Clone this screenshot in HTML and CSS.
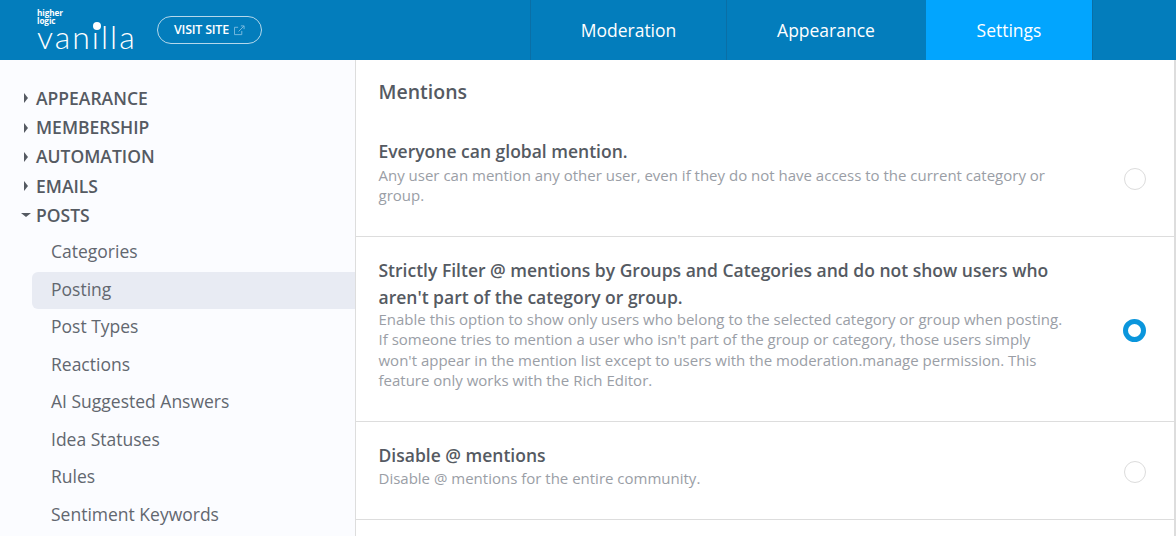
FILE: index.html
```html
<!DOCTYPE html>
<html lang="en">
<head>
<meta charset="utf-8">
<title>Mentions</title>
<link rel="stylesheet" href="styles.css">
</head>
<body>
<header class="top">
  <div class="brand">
    <a class="logo">
      <span class="logo-small">higher<br>logic</span>
      <span class="logo-word">van<span class="i">ı<span class="dot"></span></span>lla</span>
    </a>
    <a class="visit">VISIT SITE
      <svg class="ext" viewBox="0 0 12 12" width="11" height="11" fill="none" stroke="currentColor" stroke-width="1"><path d="M8.5 6.5v4h-8v-8h4"/><path d="M5 7l6-6M7.5 1H11v3.5"/></svg>
    </a>
  </div>
  <nav class="tabs">
    <a class="tab t1">Moderation</a>
    <a class="tab t2">Appearance</a>
    <a class="tab t3 active">Settings</a>
    <span class="tab-rest"></span>
  </nav>
</header>
<div class="body">
  <aside class="side">
    <ul class="groups">
      <li class="group"><i class="tri right"></i>APPEARANCE</li>
      <li class="group"><i class="tri right"></i>MEMBERSHIP</li>
      <li class="group"><i class="tri right"></i>AUTOMATION</li>
      <li class="group"><i class="tri right"></i>EMAILS</li>
      <li class="group"><i class="tri down"></i>POSTS</li>
    </ul>
    <ul class="links">
      <li class="link">Categories</li>
      <li class="link current">Posting</li>
      <li class="link">Post Types</li>
      <li class="link">Reactions</li>
      <li class="link">AI Suggested Answers</li>
      <li class="link">Idea Statuses</li>
      <li class="link">Rules</li>
      <li class="link">Sentiment Keywords</li>
    </ul>
  </aside>
  <main class="main">
    <h1 class="title">Mentions</h1>
    <section class="row r1">
      <div class="text">
        <h2>Everyone can global mention.</h2>
        <p>Any user can mention any other user, even if they do not have access to the current category or group.</p>
      </div>
      <span class="radio"></span>
    </section>
    <section class="row r2">
      <div class="text">
        <h2>Strictly Filter @ mentions by Groups and Categories and do not show users who aren't part of the category or group.</h2>
        <p>Enable this option to show only users who belong to the selected category or group when posting. If someone tries to mention a user who isn't part of the group or category, those users simply won't appear in the mention list except to users with the moderation.manage permission. This feature only works with the Rich Editor.</p>
      </div>
      <span class="radio on"></span>
    </section>
    <section class="row r3">
      <div class="text">
        <h2>Disable @ mentions</h2>
        <p>Disable @ mentions for the entire community.</p>
      </div>
      <span class="radio"></span>
    </section>
  </main>
</div>
</body>
</html>
```
FILE: styles.css
```css
* { box-sizing: border-box; }
html, body { margin: 0; height: 536px; overflow: hidden; }
body { font-family: "Open Sans", sans-serif; color: #555a62; background: #fff; }
ul { list-style: none; margin: 0; padding: 0; }
h1, h2, p { margin: 0; }

.top { height: 60px; background: #037dbc; display: flex; color: #fff; }
.brand { width: 530px; display: flex; align-items: flex-start; padding-left: 37px; }
.logo { display: block; width: 120px; height: 60px; }
.logo-small { display: block; font: 700 8.2px/8px "Open Sans", sans-serif; padding-top: 8.5px; letter-spacing: -0.1px; }
.logo-word { display: block; font: 300 32px/26px "Lato", sans-serif; letter-spacing: 2px; margin-top: -1px; }
.i { position: relative; }
.dot { position: absolute; width: 8.5px; height: 8.5px; border-radius: 50%; background: #fff; left: 0.8px; top: 5px; }
.visit { margin-top: 16px; width: 105px; height: 28px; border: 1px solid #b5d8eb; border-radius: 14px; display: flex; align-items: center; justify-content: center; gap: 5px; font: 600 12.5px/1 "Open Sans", sans-serif; letter-spacing: -0.25px; }
.ext { color: #7fbde0; }
.tabs { flex: 1; display: flex; }
.tab { display: flex; align-items: center; justify-content: center; font-size: 17.5px; border-left: 1px solid #0a6fa6; }
.t1 { width: 196px; }
.t2 { width: 200px; padding-right: 1px; }
.t3 { width: 166px; padding-right: 1px; }
.active { background: #02a5fe; border-left-color: #02a5fe; }
.tab-rest { flex: 1; border-left: 1px solid #0a6fa6; }

.body { display: flex; height: 476px; }
.side { width: 356px; background: #fbfcff; border-right: 1px solid #ddd; padding: 23.75px 0 0 22px; overflow: hidden; flex: none; }
.group { font-size: 17.5px; font-weight: 600; line-height: 29.25px; display: flex; align-items: center; color: #555a62; }
.tri { width: 14px; height: 10px; flex: none; position: relative; display: block; }
.tri::before { content: ""; position: absolute; border-style: solid; border-color: transparent; }
.tri.right::before { left: 2px; top: 0; border-width: 5px 0 5px 4px; border-left-color: #555a62; }
.tri.down::before { left: -1px; top: 3px; border-width: 4px 5px 0; border-top-color: #555a62; }
.links { margin-top: 4px; margin-left: 10px; }
.link { height: 37.5px; padding-left: 19px; font-size: 17.5px; line-height: 34px; color: #62676f; }
.current { background: #e8ebf3; border-radius: 6px 0 0 6px; }

.main { flex: 1; border-right: 2px solid #ddd; }
.title { font-size: 19.5px; font-weight: 600; line-height: 24px; padding: 20px 22.5px 0; color: #555a62; height: 56px; }
.row { display: flex; align-items: flex-start; padding: 19.5px 22.5px 0; border-bottom: 1px solid #ddd; }
.r1 { height: 121px; padding-top: 21.5px; }
.r2 { height: 185px; }
.r3 { height: 98px; }
.text { width: 690px; }
h2 { font-size: 17.5px; font-weight: 600; line-height: 27px; color: #555a62; }
.text p { font-size: 15px; line-height: 20.25px; color: #9a9ea6; }
.r2 .text p { margin-top: -1.5px; }
.r3 .text p { margin-top: -1px; }
.radio { width: 22px; height: 22px; border-radius: 50%; border: 1px solid #dcdcdc; margin-left: auto; margin-right: 6px; background: #fff; flex: none; }
.r1 .radio { margin-top: 30.5px; }
.r2 .radio { margin-top: 62.5px; }
.r3 .radio { margin-top: 19.5px; }
.radio.on { border: 5px solid #0b96dc; width: 23px; height: 23px; margin-right: 5.5px; }
```
